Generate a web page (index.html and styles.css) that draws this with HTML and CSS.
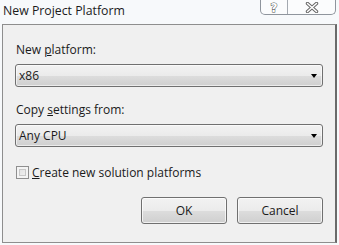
FILE: index.html
```html
<!DOCTYPE html>
<html>
<head>
<meta charset="utf-8">
<link rel="stylesheet" href="styles.css">
</head>
<body>
<div class="window">
  <div class="titlebar">
    <span class="title">New Project Platform</span>
    <div class="caption">
      <div class="cap-btn help">
        <svg width="12" height="12" viewBox="0 0 12 12"><text x="6" y="10.5" text-anchor="middle" class="qmark">?</text></svg>
      </div>
      <div class="cap-btn close">
        <svg width="14" height="11" viewBox="0 0 14 11"><path d="M2.5 1.5 L11.5 9.5 M11.5 1.5 L2.5 9.5" stroke="#666" stroke-width="3.4" stroke-linecap="round"/><path d="M2.5 1.5 L11.5 9.5 M11.5 1.5 L2.5 9.5" stroke="#fff" stroke-width="1.5" stroke-linecap="round"/></svg>
      </div>
    </div>
  </div>
  <div class="panel">
    <div class="label">New <u>p</u>latform:</div>
    <div class="combo"><span>x86</span><span class="arrow"></span></div>
    <div class="label gap">Copy <u>s</u>ettings from:</div>
    <div class="combo"><span>Any CPU</span><span class="arrow"></span></div>
    <div class="check-row"><span class="checkbox"></span><span><u>C</u>reate new solution platforms</span></div>
    <div class="buttons">
      <div class="btn">OK</div>
      <div class="btn">Cancel</div>
    </div>
  </div>
</div>
</body>
</html>
```

FILE: styles.css
```css
html, body {
  margin: 0;
  padding: 0;
}
body {
  width: 339px;
  height: 245px;
  background: #f7f9fb;
  font-family: "Open Sans", "Noto Sans", sans-serif;
  font-size: 12px;
  color: #1a1a1a;
  overflow: hidden;
}
.window {
  display: flex;
  flex-direction: column;
}
.titlebar {
  height: 24px;
  display: flex;
  justify-content: space-between;
  align-items: flex-start;
}
.title {
  margin-left: 3px;
  margin-top: 1px;
  font-size: 12.3px;
  line-height: 20px;
  color: #1b1b1b;
}
.caption {
  display: flex;
  margin-right: 3px;
  height: 14px;
  border: 1px solid #8f959d;
  border-top: none;
  border-radius: 0 0 5px 5px;
  background: rgba(255,255,255,0.55);
}
.cap-btn {
  display: flex;
  align-items: center;
  justify-content: center;
}
.help {
  width: 26px;
  border-right: 1px solid #a4a9b0;
}
.close {
  width: 47px;
}
.qmark {
  font-family: "DejaVu Sans", sans-serif;
  font-size: 12px;
  font-weight: bold;
  fill: #fff;
  stroke: #555;
  stroke-width: 1;
  paint-order: stroke;
}
.panel {
  margin-left: 2px;
  width: 335px;
  height: 219px;
  box-sizing: border-box;
  background: #f0f0f0;
  border: 1px solid #8e8e8e;
  border-right: 2px solid #6a6a6a;
  padding: 17px 12px 0 12px;
  display: flex;
  flex-direction: column;
}
.label {
  height: 16px;
  line-height: 16px;
  margin-left: 1px;
}
.label.gap {
  margin-top: 15px;
}
.combo {
  margin-top: 6px;
  height: 23px;
  box-sizing: border-box;
  border: 1px solid #707070;
  border-radius: 3px;
  background: linear-gradient(#f2f2f2 0%, #ebebeb 50%, #dddddd 51%, #cfcfcf 100%);
  box-shadow: inset 0 0 0 1px rgba(255,255,255,0.6);
  display: flex;
  align-items: center;
  justify-content: space-between;
  padding: 0 5px 0 3px;
}
.arrow {
  width: 0;
  height: 0;
  border-left: 3.5px solid transparent;
  border-right: 3.5px solid transparent;
  border-top: 4px solid #000;
}
.check-row {
  margin-top: 19px;
  display: flex;
  align-items: center;
  height: 13px;
  margin-left: 1px;
}
.checkbox {
  width: 13px;
  height: 13px;
  box-sizing: border-box;
  border: 1px solid #8f8f8f;
  background: linear-gradient(135deg, #dcdcdc, #f6f6f6);
  box-shadow: inset 0 0 0 2px #f4f4f4, inset 0 0 0 3px #c8c8c8;
  margin-right: 3px;
}
.buttons {
  margin-top: 18px;
  display: flex;
  justify-content: flex-end;
  gap: 10px;
}
.btn {
  width: 86px;
  height: 27px;
  box-sizing: border-box;
  border: 1px solid #707070;
  border-radius: 3px;
  background: linear-gradient(#f2f2f2 0%, #ebebeb 50%, #dddddd 51%, #cfcfcf 100%);
  box-shadow: inset 0 0 0 1px rgba(255,255,255,0.7);
  display: flex;
  align-items: center;
  justify-content: center;
}
```
